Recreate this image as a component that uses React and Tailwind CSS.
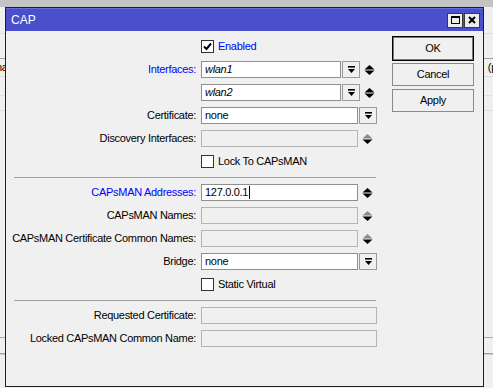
import clsx from "clsx";

const BLUE = "text-[#0000ff]";

function DropIcon() {
  return (
    <svg width="7" height="7" viewBox="0 0 7 7">
      <rect x="0" y="0" width="7" height="1.6" fill="#000" />
      <polygon points="0,3 7,3 3.5,7" fill="#000" />
    </svg>
  );
}

function Spin({ disabled }) {
  return (
    <svg width="11" height="10" viewBox="0 0 11 10" className="ml-[4px] shrink-0">
      <polygon points="0.5,4.5 5.5,0 10.5,4.5" fill={disabled ? "#8c8c8c" : "#000"} />
      <polygon points="0.5,5.5 5.5,10 10.5,5.5" fill="#000" />
    </svg>
  );
}

function Field({ value, italic, disabled, cursor, className }) {
  return (
    <div
      className={clsx(
        "h-[17px] border flex items-center pl-[3px] whitespace-nowrap overflow-hidden",
        disabled ? "bg-[#f0f0f0] border-[#b4b4b4]" : "bg-white border-[#8f8f8f]",
        italic && "italic",
        className
      )}
    >
      {value}
      {cursor && <span className="inline-block w-px h-[13px] bg-black ml-px" />}
    </div>
  );
}

function Drop() {
  return (
    <div className="ml-px h-[17px] w-[18px] border border-[#9a9a9a] bg-[#f0f0f0] flex items-center justify-center shrink-0">
      <DropIcon />
    </div>
  );
}

function Row({ label, blue, children }) {
  return (
    <div className="flex items-center h-[17px]">
      <div className={clsx("w-[190px] text-right whitespace-nowrap", blue && BLUE)}>{label}</div>
      <div className="ml-[5px] flex items-center">{children}</div>
    </div>
  );
}

function Check({ checked, label, blue }) {
  return (
    <div className="flex items-center h-[17px] pl-[195px]">
      <div className="w-[13px] h-[13px] border border-[#333] bg-white flex items-center justify-center">
        {checked && (
          <svg width="9" height="9" viewBox="0 0 9 9">
            <path d="M1 4.5 L3.5 7 L8 1.5" stroke="#000" strokeWidth="2" fill="none" />
          </svg>
        )}
      </div>
      <span className={clsx("ml-[4px]", blue && BLUE)}>{label}</span>
    </div>
  );
}

function Sep() {
  return <div className="ml-[8px] w-[362px] h-[2px] border-b border-[#a0a0a0]" />;
}

function Backdrop() {
  return (
    <div className="absolute inset-0 flex flex-col">
      <div className="h-[7px] bg-[#c3c3c3]" />
      <div className="h-[26px]" />
      <div className="h-px bg-[#dcdcdc]" />
      <div className="h-[24px]" />
      <div className="h-px bg-[#a0a0a0]" />
      <div className="h-[17px] flex justify-between items-center text-[11px]">
        <span className="-ml-[4px]">na</span>
        <span className="mr-[-4px]">(p</span>
      </div>
      <div className="h-px bg-[#dcdcdc]" />
      <div className="h-[18px]" />
      <div className="h-px bg-[#e0e0e0]" />
      <div className="h-[14px]" />
      <div className="h-px bg-[#dcdcdc]" />
      <div className="h-[226px]" />
      <div className="h-px bg-[#a8a8a8]" />
      <div className="h-[15px]" />
      <div className="h-px bg-[#a0a0a0]" />
      <div className="h-px bg-[#d0d0d0]" />
    </div>
  );
}

export default function App() {
  return (
    <div className="relative w-[493px] h-[388px] overflow-hidden bg-[#f0f0f0] font-['Liberation_Sans',Arial,sans-serif] text-[11px] tracking-[-0.3px] text-black leading-none">
      <Backdrop />
      <div className="absolute left-[5px] top-[7px] w-[479px] h-[380px] border border-[#1e1e1e] bg-[#f0f0f0] flex flex-col">
        {/* title bar */}
        <div className="h-[23px] bg-[#4a4fcb] flex items-center pl-[5px] pr-[3px] border-t border-[#6a6ed8]">
          <span className="text-white text-[12px] tracking-normal">CAP</span>
          <div className="ml-auto flex gap-px">
            <div className="w-[16px] h-[15px] border border-[#3a3a3a] bg-[#ececec] flex items-center justify-center">
              <div className="w-[9px] h-[8px] border border-black border-t-2" />
            </div>
            <div className="w-[16px] h-[15px] border border-[#3a3a3a] bg-[#ececec] flex items-center justify-center">
              <svg width="8" height="8" viewBox="0 0 8 8">
                <path d="M1 1 L7 7 M7 1 L1 7" stroke="#000" strokeWidth="2" />
              </svg>
            </div>
          </div>
        </div>

        {/* body */}
        <div className="flex flex-1">
          <div className="w-[386px] pt-[7px] flex flex-col gap-[6px]">
            <Check checked label="Enabled" blue />
            <Row label="Interfaces:" blue>
              <Field value="wlan1" italic className="w-[140px]" />
              <Drop />
              <Spin />
            </Row>
            <Row label="">
              <Field value="wlan2" italic className="w-[140px]" />
              <Drop />
              <Spin />
            </Row>
            <Row label="Certificate:">
              <Field value="none" className="w-[157px]" />
              <Drop />
            </Row>
            <Row label="Discovery Interfaces:">
              <Field disabled className="w-[157px]" />
              <Spin disabled />
            </Row>
            <Check label="Lock To CAPsMAN" />
            <Sep />
            <Row label="CAPsMAN Addresses:" blue>
              <Field value="127.0.0.1" cursor className="w-[157px]" />
              <Spin />
            </Row>
            <Row label="CAPsMAN Names:">
              <Field disabled className="w-[157px]" />
              <Spin disabled />
            </Row>
            <Row label="CAPsMAN Certificate Common Names:">
              <Field disabled className="w-[157px]" />
              <Spin disabled />
            </Row>
            <Row label="Bridge:">
              <Field value="none" className="w-[157px]" />
              <Drop />
            </Row>
            <Check label="Static Virtual" />
            <Sep />
            <Row label="Requested Certificate:">
              <Field disabled className="w-[176px]" />
            </Row>
            <Row label="Locked CAPsMAN Common Name:">
              <Field disabled className="w-[176px]" />
            </Row>
          </div>

          <div className="w-[82px] pt-[5px] flex flex-col">
            <div className="h-[25px] border border-black shadow-[inset_0_0_0_1px_#7a7a7a] bg-[#f0f0f0] flex items-center justify-center">
              OK
            </div>
            <div className="mt-[2px] h-[23px] border border-[#8a8a8a] bg-[#f0f0f0] flex items-center justify-center">
              Cancel
            </div>
            <div className="mt-[3px] h-[23px] border border-[#8a8a8a] bg-[#f0f0f0] flex items-center justify-center">
              Apply
            </div>
          </div>
        </div>
      </div>
    </div>
  );
}
